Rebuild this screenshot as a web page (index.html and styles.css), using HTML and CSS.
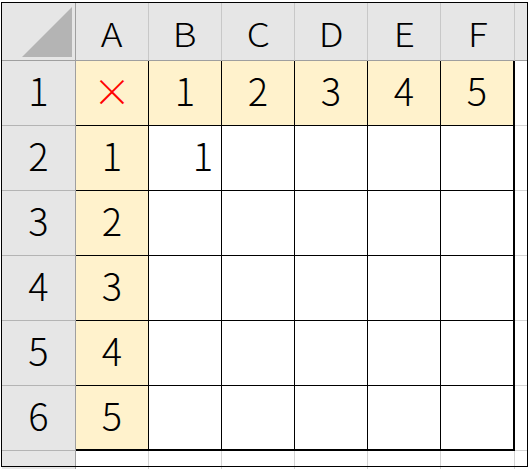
FILE: index.html
```html
<!DOCTYPE html>
<html lang="ja">
<head>
<meta charset="utf-8">
<link rel="stylesheet" href="styles.css">
</head>
<body>
<div class="sheet">
  <div class="grid">
    <div class="corner"><svg class="tri" width="73" height="57" viewBox="0 0 73 57"><polygon points="20,54 70,4 70,54" fill="#b4b4b4"/></svg></div>
    <div class="ch"><span>A</span></div>
    <div class="ch"><span>B</span></div>
    <div class="ch"><span>C</span></div>
    <div class="ch"><span>D</span></div>
    <div class="ch"><span>E</span></div>
    <div class="ch"><span>F</span></div>
    <div class="ch gh"></div>

    <div class="rh">1</div>
    <div class="c y mul">×</div>
    <div class="c y">1</div>
    <div class="c y">2</div>
    <div class="c y">3</div>
    <div class="c y">4</div>
    <div class="c y f">5</div>
    <div class="c g"></div>

    <div class="rh">2</div>
    <div class="c y">1</div>
    <div class="c num">1</div>
    <div class="c"></div>
    <div class="c"></div>
    <div class="c"></div>
    <div class="c f"></div>
    <div class="c g"></div>

    <div class="rh">3</div>
    <div class="c y">2</div>
    <div class="c"></div>
    <div class="c"></div>
    <div class="c"></div>
    <div class="c"></div>
    <div class="c f"></div>
    <div class="c g"></div>

    <div class="rh">4</div>
    <div class="c y">3</div>
    <div class="c"></div>
    <div class="c"></div>
    <div class="c"></div>
    <div class="c"></div>
    <div class="c f"></div>
    <div class="c g"></div>

    <div class="rh">5</div>
    <div class="c y">4</div>
    <div class="c"></div>
    <div class="c"></div>
    <div class="c"></div>
    <div class="c"></div>
    <div class="c f"></div>
    <div class="c g"></div>

    <div class="rh">6</div>
    <div class="c y b">5</div>
    <div class="c b"></div>
    <div class="c b"></div>
    <div class="c b"></div>
    <div class="c b"></div>
    <div class="c f b"></div>
    <div class="c g"></div>

    <div class="rh r7">7</div>
    <div class="e"></div>
    <div class="e"></div>
    <div class="e"></div>
    <div class="e"></div>
    <div class="e"></div>
    <div class="e"></div>
    <div class="e g"></div>
  </div>
  <div class="frame"></div>
</div>
</body>
</html>
```

FILE: styles.css
```css
html, body {
  margin: 0;
  padding: 0;
  background: #fff;
  overflow: hidden;
}
body {
  width: 532px;
  height: 469px;
}
.sheet {
  position: relative;
  width: 532px;
  height: 469px;
  padding: 3px 0 0 2px;
  box-sizing: border-box;
  font-family: "Noto Sans CJK JP", "Noto Sans", sans-serif;
  font-weight: 300;
  color: #000;
  overflow: hidden;
}
.grid {
  display: grid;
  grid-template-columns: 74px repeat(5, 73px) 74px 12px;
  grid-template-rows: 58px repeat(6, 65px) 18px;
}
.grid > div {
  box-sizing: border-box;
  display: flex;
  align-items: center;
  justify-content: center;
  overflow: hidden;
}
.corner {
  background: #e6e6e6;
  border-right: 1px solid #9f9f9f;
  border-bottom: 1px solid #9f9f9f;
}
.tri {
  display: block;
}
.ch {
  background: #e6e6e6;
  border-right: 1px solid #c8c8c8;
  border-bottom: 1px solid #9f9f9f;
  font-size: 33px;
  line-height: 1;
  padding-top: 3px;
}
.ch span {
  display: inline-block;
  transform: scaleX(1.12);
}
.gh {
  border-right: none;
}
.rh {
  background: #e6e6e6;
  border-right: 1px solid #9f9f9f;
  border-bottom: 1px solid #b4b4b4;
  font-size: 38px;
  line-height: 1;
  padding-bottom: 6px;
}
.rh.r7 {
  align-items: flex-start;
  padding: 13px 0 0;
  border-bottom: none;
}
.c {
  background: #fff;
  border-right: 1px solid #000;
  border-bottom: 1px solid #000;
  font-size: 38px;
  line-height: 1;
  padding-bottom: 6px;
}
.c.y {
  background: #fff2cc;
}
.c.f {
  border-right: 2px solid #000;
}
.c.b {
  border-bottom: 2px solid #000;
}
.c.g {
  border-right: none;
  border-bottom: 1px solid #d4d4d4;
}
.c.num {
  justify-content: flex-end;
  padding-right: 8px;
}
.c.mul {
  color: #ff0000;
}
.e {
  border-right: 1px solid #d4d4d4;
}
.e.g {
  border-right: none;
}
.frame {
  position: absolute;
  left: 1px;
  top: 2px;
  width: 527px;
  height: 465px;
  box-sizing: border-box;
  border: 1px solid #000;
  pointer-events: none;
}
```
